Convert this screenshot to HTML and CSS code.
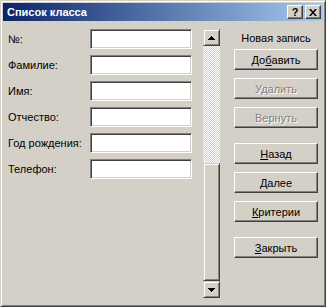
FILE: index.html
```html
<!DOCTYPE html>
<html>
<head lang="ru">
    <meta charset="UTF-8">
    <title>Список класса</title>
    <link rel="stylesheet" href="styles.css">
</head>
<body>
<div class="window">
    <div class="titlebar">
        <span class="title">Список класса</span>
        <div class="caption-btns">
            <span class="cap-btn help">?</span>
            <span class="cap-btn close">
                <svg width="8" height="7" viewBox="0 0 8 7"><path d="M0 0h2l2 2.4 2-2.4h2l-3 3.5 3 3.5h-2l-2-2.4-2 2.4h-2l3-3.5z" fill="#000"/></svg>
            </span>
        </div>
    </div>
    <div class="client">
        <div class="fields">
            <div class="row"><label>№:</label><div class="input"></div></div>
            <div class="row"><label>Фамилие:</label><div class="input"></div></div>
            <div class="row"><label>Имя:</label><div class="input"></div></div>
            <div class="row"><label>Отчество:</label><div class="input"></div></div>
            <div class="row"><label>Год рождения:</label><div class="input"></div></div>
            <div class="row"><label>Телефон:</label><div class="input"></div></div>
        </div>
        <div class="scrollbar">
            <div class="sb-btn">
                <svg width="7" height="4" viewBox="0 0 7 4"><path d="M3 0h1v1h1v1h1v1h1v1h-7v-1h1v-1h1v-1h1z" fill="#000"/></svg>
            </div>
            <div class="sb-track"></div>
            <div class="sb-thumb"></div>
            <div class="sb-btn">
                <svg width="7" height="4" viewBox="0 0 7 4"><path d="M0 0h7v1h-1v1h-1v1h-1v1h-1v-1h-1v-1h-1v-1h-1z" fill="#000"/></svg>
            </div>
        </div>
        <div class="actions">
            <div class="status">Новая запись</div>
            <div class="group">
                <div class="btn">До<u>б</u>авить</div>
                <div class="btn disabled">Удалить</div>
                <div class="btn disabled">Вернуть</div>
            </div>
            <div class="group">
                <div class="btn"><u>Н</u>азад</div>
                <div class="btn"><u>Д</u>алее</div>
                <div class="btn"><u>К</u>ритерии</div>
            </div>
            <div class="group">
                <div class="btn"><u>З</u>акрыть</div>
            </div>
        </div>
    </div>
</div>
</body>
</html>
```
FILE: styles.css
```css
body{
    margin: 0;
    font-family: "Liberation Sans", Arial, sans-serif;
    font-size: 11px;
    color: #000;
}
.window{
    width: 326px;
    height: 307px;
    box-sizing: border-box;
    background: #d4d0c8;
    border: 1px solid;
    border-color: #d4d0c8 #404040 #404040 #d4d0c8;
    box-shadow: inset 1px 1px #fff, inset -1px -1px #808080;
    padding: 2px;
}
.titlebar{
    height: 18px;
    display: flex;
    align-items: center;
    justify-content: space-between;
    padding: 0 2px 0 4px;
    background: linear-gradient(to right, #0a246a, #a6caf0);
}
.title{
    color: #fff;
    font-weight: bold;
    font-size: 11px;
}
.caption-btns{
    display: flex;
    gap: 2px;
}
.cap-btn{
    width: 16px;
    height: 14px;
    box-sizing: border-box;
    background: #d4d0c8;
    border: 1px solid;
    border-color: #fff #404040 #404040 #fff;
    box-shadow: inset -1px -1px #808080;
    display: flex;
    align-items: center;
    justify-content: center;
}
.help{
    font-weight: bold;
    font-size: 11px;
    line-height: 1;
}
.client{
    display: flex;
    padding: 8px 0 0 5px;
}
.fields{
    display: flex;
    flex-direction: column;
    gap: 6px;
}
.row{
    display: flex;
    align-items: center;
    height: 20px;
}
.row label{
    width: 82px;
}
.input{
    width: 102px;
    height: 20px;
    box-sizing: border-box;
    background: #fff;
    border: 1px solid;
    border-color: #808080 #fff #fff #808080;
    box-shadow: inset 1px 1px #404040, inset -1px -1px #d4d0c8;
}
.scrollbar{
    margin-left: 11px;
    width: 17px;
    height: 269px;
    display: flex;
    flex-direction: column;
}
.sb-btn, .sb-thumb{
    box-sizing: border-box;
    background: #d4d0c8;
    border: 1px solid;
    border-color: #d4d0c8 #404040 #404040 #d4d0c8;
    box-shadow: inset 1px 1px #fff, inset -1px -1px #808080;
}
.sb-btn{
    height: 17px;
    display: flex;
    align-items: center;
    justify-content: center;
}
.sb-track{
    height: 117px;
    background: repeating-conic-gradient(#fff 0 25%, #d4d0c8 0 50%) 0 0/2px 2px;
}
.sb-thumb{
    height: 118px;
}
.actions{
    margin-left: 14px;
    width: 84px;
    display: flex;
    flex-direction: column;
}
.status{
    height: 20px;
    line-height: 18px;
    text-align: center;
}
.group{
    display: flex;
    flex-direction: column;
    gap: 8px;
    margin-bottom: 15px;
}
.btn{
    height: 21px;
    box-sizing: border-box;
    border: 1px solid;
    border-color: #fff #404040 #404040 #fff;
    box-shadow: inset -1px -1px #808080;
    display: flex;
    align-items: center;
    justify-content: center;
}
.btn.disabled{
    color: #808080;
    text-shadow: 1px 1px #fff;
}
```
